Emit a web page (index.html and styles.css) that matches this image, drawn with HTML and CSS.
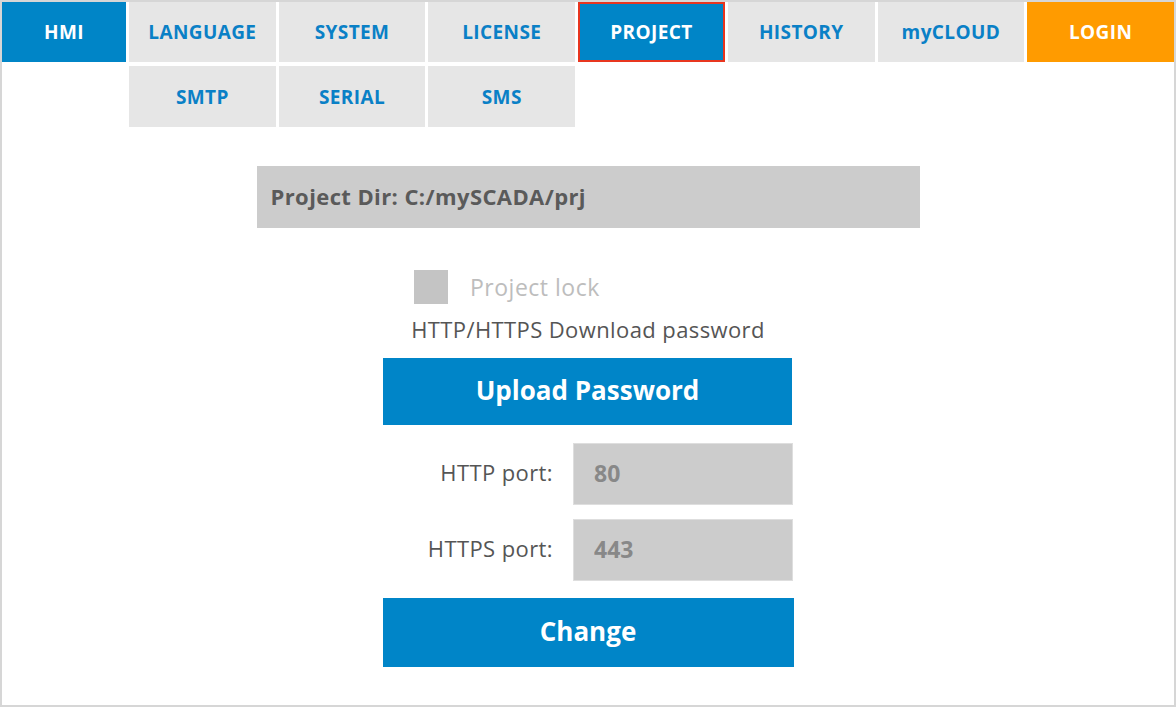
FILE: index.html
```html
<!DOCTYPE html>
<html lang="en">

<head>
    <meta charset="UTF-8">
    <title>mySCADA - Project</title>
    <link rel="stylesheet" href="styles.css">
</head>

<body>
    <div class="page">
        <!-- Main menu -->
        <nav class="menu">
            <a class="tile tile-blue">HMI</a>
            <a class="tile">LANGUAGE</a>
            <a class="tile">SYSTEM</a>
            <a class="tile">LICENSE</a>
            <a class="tile tile-blue active">PROJECT</a>
            <a class="tile">HISTORY</a>
            <a class="tile">myCLOUD</a>
            <a class="tile tile-orange">LOGIN</a>
            <a class="tile sub-first">SMTP</a>
            <a class="tile">SERIAL</a>
            <a class="tile">SMS</a>
        </nav>

        <!-- Project settings -->
        <div class="content">
            <div class="dir-box">Project Dir: C:/mySCADA/prj</div>

            <div class="form">
                <label class="lock-row">
                    <span class="checkbox"></span>
                    <span class="lock-text">Project lock</span>
                </label>

                <div class="pass-title">HTTP/HTTPS Download password</div>
                <button class="btn btn-upload">Upload Password</button>

                <div class="port-row">
                    <span class="port-label">HTTP port:</span>
                    <input class="port-input" type="text" value="80">
                </div>
                <div class="port-row">
                    <span class="port-label">HTTPS port:</span>
                    <input class="port-input" type="text" value="443">
                </div>

                <button class="btn btn-change">Change</button>
            </div>
        </div>
    </div>
</body>

</html>
```

FILE: styles.css
```css
/* Page frame */
body {
    margin: 0;
    font-family: "Open Sans", "Noto Sans", sans-serif;
    background-color: #fff;
}

.page {
    width: 1176px;
    height: 707px;
    box-sizing: border-box;
    border: 2px solid #d6d6d6;
    background-color: #fff;
}

/* Top menu tiles */
.menu {
    display: grid;
    grid-template-columns: 124px repeat(7, 1fr);
    grid-template-rows: 60px 61px;
    column-gap: 3px;
    row-gap: 4px;
}

.tile {
    display: flex;
    align-items: center;
    justify-content: center;
    box-sizing: border-box;
    background-color: #e6e6e6;
    color: #0a80c6;
    font-weight: 700;
    font-size: 19px;
    letter-spacing: 0.4px;
    cursor: pointer;
}

.tile-blue {
    background-color: #0085c7;
    color: #fff;
}

.tile-orange {
    background-color: #ff9b00;
    color: #fff;
}

.active {
    border: 2px solid #e8361f;
}

.sub-first {
    grid-column: 2;
}

/* Content column */
.content {
    display: flex;
    flex-direction: column;
    align-items: center;
}

.dir-box {
    width: 663px;
    height: 62px;
    margin-top: 39px;
    box-sizing: border-box;
    padding-left: 14px;
    padding-bottom: 2px;
    display: flex;
    align-items: center;
    background-color: #cccccc;
    color: #5a5a5a;
    font-size: 22px;
    font-weight: 700;
    letter-spacing: 0.4px;
}

.form {
    width: 410px;
    display: flex;
    flex-direction: column;
    margin-top: 42px;
}

.lock-row {
    display: flex;
    align-items: center;
    padding-left: 31px;
    cursor: pointer;
}

.checkbox {
    width: 34px;
    height: 34px;
    background-color: #c4c4c4;
}

.lock-text {
    margin-left: 22px;
    color: #bdbdbd;
    font-size: 23px;
    letter-spacing: 0.5px;
}

.pass-title {
    margin-top: 10px;
    line-height: 30px;
    text-align: center;
    color: #555;
    font-size: 22px;
    letter-spacing: 0.4px;
}

.btn {
    border: none;
    padding: 0 0 4px;
    background-color: #0085c8;
    color: #fff;
    font-family: inherit;
    font-weight: 700;
    font-size: 26px;
    cursor: pointer;
}

.btn-upload {
    height: 67px;
    width: 409px;
    margin-top: 14px;
}

.port-row {
    display: flex;
    align-items: center;
    margin-top: 18px;
}

.port-row + .port-row {
    margin-top: 14px;
}

.port-label {
    width: 170px;
    padding-bottom: 5px;
    text-align: right;
    color: #555;
    font-size: 22px;
    letter-spacing: 0.4px;
}

.port-input {
    width: 220px;
    height: 62px;
    margin-left: 20px;
    box-sizing: border-box;
    border: 1px solid #dedede;
    background-color: #cccccc;
    padding: 0 0 2px 20px;
    font-family: inherit;
    font-size: 23px;
    font-weight: 700;
    color: #888;
    outline: none;
}

.btn-change {
    align-self: center;
    height: 69px;
    width: 411px;
    margin-top: 17px;
}
```
